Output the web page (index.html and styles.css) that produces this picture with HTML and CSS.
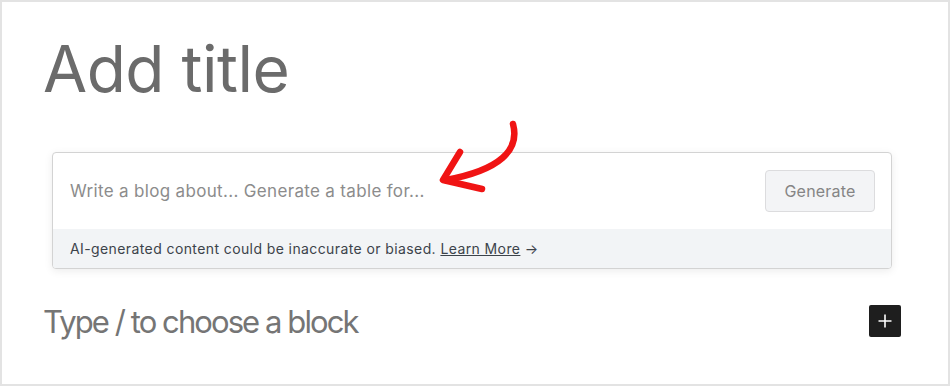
FILE: index.html
```html
<!DOCTYPE html>
<html>
<head>
<meta charset="utf-8">
<link rel="stylesheet" href="styles.css">
</head>
<body>
<div class="frame">
  <h1 class="title">Add title</h1>
  <div class="card">
    <div class="prompt-row">
      <span class="placeholder">Write a blog about... Generate a table for...</span>
      <button class="gen-btn">Generate</button>
    </div>
    <div class="notice">AI-generated content could be inaccurate or biased. <a class="learn" href="#">Learn More</a> →</div>
  </div>
  <div class="block-row">
    <span class="block-ph">Type / to choose a block</span>
    <span class="plus-btn">
      <svg width="16" height="16" viewBox="0 0 16 16"><path d="M8 1.5v13M1.5 8h13" stroke="#fff" stroke-width="1.6" fill="none"/></svg>
    </span>
  </div>
  <svg class="annot" width="950" height="386" viewBox="0 0 950 386">
    <path d="M513 124 C 520 150, 500 170, 446 180" stroke="#f01414" stroke-width="6.5" fill="none" stroke-linecap="round"/>
    <path d="M460 152 L 443 180 L 482 189" stroke="#f01414" stroke-width="6.5" fill="none" stroke-linecap="round" stroke-linejoin="round"/>
  </svg>
</div>
</body>
</html>
```
FILE: styles.css
```css
html, body { margin: 0; padding: 0; background: #fff; }
.frame {
  position: relative;
  width: 950px;
  height: 386px;
  box-sizing: border-box;
  border: 2px solid #e3e3e3;
  padding: 0 0 0 41px;
  font-family: "Inter", "Noto Sans", sans-serif;
}
.title {
  margin: 0;
  padding-top: 29px;
  font-size: 64px;
  line-height: 76px;
  font-weight: 400;
  color: #6b6b6b;
  letter-spacing: -0.5px;
}
.card {
  margin: 45px 0 0 9px;
  width: 840px;
  box-sizing: border-box;
  border: 1px solid #d3d3d3;
  border-radius: 4px;
  box-shadow: 0 2px 8px rgba(0,0,0,0.08);
  overflow: hidden;
  background: #fff;
}
.prompt-row {
  height: 76px;
  display: flex;
  align-items: center;
  justify-content: space-between;
  padding: 0 16px 0 17px;
}
.placeholder {
  font-size: 17px;
  color: #8c8c8c;
  letter-spacing: 0.33px;
}
.gen-btn {
  width: 110px;
  height: 42px;
  background: #f3f4f6;
  border: 1px solid #dcdcde;
  border-radius: 4px;
  font-family: inherit;
  font-size: 16px;
  color: #858585;
  letter-spacing: 0.2px;
}
.notice {
  height: 39px;
  line-height: 39px;
  background: #f2f4f6;
  padding-left: 17px;
  font-size: 14px;
  color: #3c434a;
  letter-spacing: 0.4px;
}
.learn { color: #3c434a; text-decoration: underline; }
.block-row {
  margin-top: 34px;
  display: flex;
  align-items: center;
  justify-content: space-between;
  padding-right: 47px;
}
.block-ph {
  font-size: 31px;
  line-height: 32px;
  padding-top: 3px;
  color: #757575;
  letter-spacing: -1.92px;
}
.plus-btn {
  width: 32px;
  height: 32px;
  background: #1e1e1e;
  border-radius: 2px;
  display: flex;
  align-items: center;
  justify-content: center;
}
.annot { position: absolute; left: -2px; top: -2px; pointer-events: none; }
```
